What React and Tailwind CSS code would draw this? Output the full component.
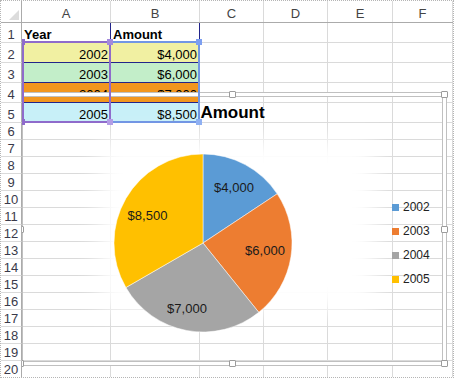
import React from 'react';

const LETTERS = ['A', 'B', 'C', 'D', 'E', 'F'];
const WIDTHS = ['w-[89px]', 'w-[89px]', 'w-[64px]', 'w-[64px]', 'w-[65px]', 'flex-1'];

const DATA = {
  1: { bg: '', cells: ['Year', 'Amount'], bold: true },
  2: { bg: 'bg-[#f1f0a2]', cells: ['2002', '$4,000'] },
  3: { bg: 'bg-[#c3eec9]', cells: ['2003', '$6,000'] },
  4: { bg: 'bg-[#f2961e]', cells: ['2004', '$7,000'] },
  5: { bg: 'bg-[#c8f0f8]', cells: ['2005', '$8,500'] },
};

const SLICES = [
  { year: '2002', color: '#5b9bd5', d: 'M95 95 L95 6 A89 89 0 0 1 169.19 45.84 Z', label: '$4,000', lx: 126, ly: 43.7 },
  { year: '2003', color: '#ed7d31', d: 'M95 95 L169.19 45.84 A89 89 0 0 1 150.78 164.35 Z', label: '$6,000', lx: 157, ly: 107 },
  { year: '2004', color: '#a5a5a5', d: 'M95 95 L150.78 164.35 A89 89 0 0 1 17.92 139.5 Z', label: '$7,000', lx: 79, ly: 164.7 },
  { year: '2005', color: '#ffc000', d: 'M95 95 L17.92 139.5 A89 89 0 0 1 95 6 Z', label: '$8,500', lx: 39.5, ly: 71.7 },
];

const Cell = ({ row, col }) => {
  const tall = row <= 5;
  const info = DATA[row];
  const text = info && col < 2 ? info.cells[col] : '';
  const navyR = row === 1 && col < 2;
  const navyB = row >= 2 && row <= 4 && col < 2;
  const isNum = row >= 2 && row <= 5;

  return (
    <div
      className={`${WIDTHS[col]} ${tall ? 'h-[20px]' : 'h-[17px]'} shrink-0 border-r border-b ${
        navyR ? 'border-r-[#22248a]' : 'border-r-[#dadada]'
      } ${navyB ? 'border-b-[#22248a]' : 'border-b-[#dadada]'} ${info && col < 2 ? info.bg : ''} flex items-end ${
        isNum ? 'justify-end' : 'justify-start'
      } px-[2px] pb-[1px] text-[13px] leading-[13px] text-black whitespace-nowrap overflow-hidden ${
        info && info.bold ? 'font-bold' : ''
      }`}
    >
      {/* row 4 sits under the chart's frame, only the top of its text shows */}
      <span className={row === 4 ? '[clip-path:inset(0_0_8px_0)]' : ''}>{text}</span>
    </div>
  );
};

const Handle = () => <div className="w-[7px] h-[7px] bg-white border border-[#9c9c9c] rounded-[1px]" />;

const Chart = () => (
  <div className="absolute left-[-4px] top-[69px] w-[429px] h-[274px] border border-[#c0c0c0]">
    <div className="h-full border-[3px] border-white">
      <div className="relative h-full border border-[#c0c0c0] flex flex-col">
        {/* soft white plot backdrop */}
        <div className="absolute left-[77px] top-[43px] w-[275px] h-[170px] bg-white blur-[12px]" />
        <div className="relative text-center text-[17px] font-bold leading-[18px] pt-[7px] text-black">Amount</div>
        <div className="relative flex items-center mt-[26px]">
          <svg width="190" height="190" viewBox="0 0 190 190" className="ml-[85px] shrink-0">
            {SLICES.map((s) => (
              <path key={s.year} d={s.d} fill={s.color} stroke="#ffffff" strokeWidth="0.5" />
            ))}
            {SLICES.map((s) => (
              <text
                key={s.label}
                x={s.lx}
                y={s.ly}
                textAnchor="middle"
                fontSize="13"
                fontFamily="'Liberation Sans', Arial, sans-serif"
                fill="#1a1a1a"
              >
                {s.label}
              </text>
            ))}
          </svg>
          <div className="ml-[94px] flex flex-col">
            {SLICES.map((s) => (
              <div key={s.year} className="flex items-center h-[24px]">
                <span className="w-[7px] h-[7px]" style={{ backgroundColor: s.color }} />
                <span className="ml-[4px] text-[12px] leading-[14px] text-[#222]">{s.year}</span>
              </div>
            ))}
          </div>
        </div>
      </div>
    </div>
    {/* resize handles */}
    <div className="absolute inset-[-2px] flex flex-col justify-between">
      <div className="flex justify-between">
        <Handle />
        <Handle />
        <Handle />
      </div>
      <div className="flex justify-between">
        <Handle />
        <Handle />
      </div>
      <div className="flex justify-between">
        <Handle />
        <Handle />
        <Handle />
      </div>
    </div>
  </div>
);

const Selection = ({ className, lineColor, handles }) => (
  <div className={`absolute top-[18px] h-[82px] border-2 ${lineColor} ${className}`}>
    <div className="absolute left-[-5px] top-[-4px] right-[-4px] bottom-[-4px] flex flex-col justify-between">
      <div className="flex justify-between">
        <span className={`w-[6px] h-[6px] ${handles[0]}`} />
        <span className={`w-[6px] h-[6px] ${handles[1]}`} />
      </div>
      <div className="flex justify-between">
        <span className={`w-[6px] h-[6px] ${handles[2]}`} />
        <span className={`w-[6px] h-[6px] ${handles[3]}`} />
      </div>
    </div>
  </div>
);

export default function App() {
  const rows = Array.from({ length: 20 }, (_, i) => i + 1);

  return (
    <div className="w-[454px] h-[380px] bg-white font-['Liberation_Sans',Arial,sans-serif]">
      <div className="relative w-[454px] h-[378px] border border-dotted border-[#b5b5b5] overflow-hidden">
        {/* column headers */}
        <div className="flex h-[22px] border-b border-b-[#ababab]">
          <div className="w-[21px] shrink-0 border-r border-r-[#ababab]">
            <svg width="20" height="21" viewBox="0 0 20 21">
              <polygon points="18,9 18,19 8,19" fill="#dcdcdc" />
            </svg>
          </div>
          {LETTERS.map((l, i) => (
            <div
              key={l}
              className={`${WIDTHS[i]} shrink-0 border-r border-r-[#dadada] flex items-end justify-center pb-[2px] text-[13px] leading-[13px] text-[#444]`}
            >
              {l}
            </div>
          ))}
        </div>

        {/* rows */}
        {rows.map((r) => (
          <div key={r} className="flex">
            <div
              className={`w-[21px] ${r <= 5 ? 'h-[20px]' : 'h-[17px]'} shrink-0 border-r border-r-[#ababab] border-b border-b-[#dadada] flex items-end justify-center pb-[1px] text-[13px] leading-[13px] text-[#3a3a4a]`}
            >
              {r}
            </div>
            {LETTERS.map((l, c) => (
              <Cell key={l} row={r} col={c} />
            ))}
          </div>
        ))}

        {/* overlays: chart object and selected ranges */}
        <div className="absolute left-[21px] top-[22px] right-0 bottom-0 overflow-hidden">
          <Chart />
          <Selection
            className="left-[87px] w-[91px]"
            lineColor="border-[#7296e4]"
            handles={['invisible', 'bg-[#7d9ff0]', 'invisible', 'bg-[#8fb0f2]']}
          />
          <Selection
            className="left-0 w-[89px]"
            lineColor="border-[#8f6bcb]"
            handles={['bg-[#8f6bcb]', 'bg-[#a389dc]', 'bg-[#8f6bcb]', 'bg-[#b39de6]']}
          />
        </div>
      </div>
    </div>
  );
}
